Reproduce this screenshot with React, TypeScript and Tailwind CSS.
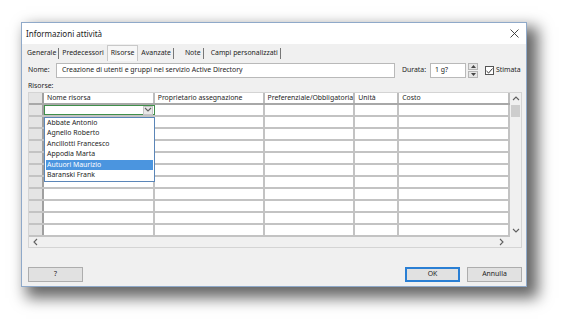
import React from "react";

const FONT = "font-['Noto_Sans',sans-serif]";

const COLS = [
  { label: "Nome risorsa", w: "w-[111px]" },
  { label: "Proprietario assegnazione", w: "w-[110px]" },
  { label: "Preferenziale/Obbligatoria", w: "w-[91px]" },
  { label: "Unità", w: "w-[44px]" },
  { label: "Costo", w: "w-[111px]" },
];

const RESOURCES = [
  "Abbate Antonio",
  "Agnello Roberto",
  "Ancillotti Francesco",
  "Appodia Marta",
  "Autuori Maurizio",
  "Baranski Frank",
];

const TABS = ["Generale", "Predecessori", "Risorse", "Avanzate", "Note", "Campi personalizzati"];

function Chevron({ dir }: { dir: "up" | "down" | "left" | "right" }) {
  const d = {
    up: "M1 5 L4 2 L7 5",
    down: "M1 2 L4 5 L7 2",
    left: "M5 1 L2 4 L5 7",
    right: "M2 1 L5 4 L2 7",
  }[dir];
  return (
    <svg width="8" height="8" viewBox="0 0 8 8" className="block">
      <path d={d} fill="none" stroke="#606060" strokeWidth="1.1" />
    </svg>
  );
}

function Button({ label, primary }: { label: string; primary?: boolean }) {
  return (
    <div
      className={`w-[55px] h-[15px] flex items-center justify-center bg-[#e1e1e1] text-[#222] ${
        primary ? "border-2 border-[#2a7fd4]" : "border border-[#adadad]"
      }`}
    >
      {label}
    </div>
  );
}

export default function App() {
  return (
    <div className={`w-[570px] h-[330px] bg-white overflow-hidden pl-[21px] pt-[22px] ${FONT} text-[6.9px] text-[#1e1e1e]`}>
      {/* DIALOG */}
      <div className="w-[506px] h-[265px] flex flex-col bg-[#f0f0f0] border border-[#8fa9c9] shadow-[8px_8px_14px_3px_rgba(0,0,0,0.6)]">
        {/* TITLE */}
        <div className="h-[21px] bg-white flex items-center justify-between pl-[4px] pr-[7px] text-[8px] text-[#222]">
          <span>Informazioni attività</span>
          <svg width="9" height="9" viewBox="0 0 9 9">
            <path d="M0.5 0.5 L8.5 8.5 M8.5 0.5 L0.5 8.5" stroke="#333" strokeWidth="0.9" />
          </svg>
        </div>

        {/* TABS */}
        <div className="h-[17px] flex items-end pl-[4px]">
          {TABS.map((t, i) =>
            t === "Risorse" ? (
              <div key={t} className="h-[16px] px-[3px] flex items-center bg-[#f7f7f7] border-x border-t border-[#c9c9c9] mx-[1px]">
                {t}
              </div>
            ) : (
              <div key={t} className={`h-[15px] flex items-center ${t === "Note" ? "pl-[9px] pr-[5px]" : i === 0 ? "pl-[1px] pr-[1px]" : "px-[2px]"}`}>
                <span>{t}</span>
                {TABS[i + 1] !== "Risorse" && <span className="ml-[2px] w-[1px] h-[11px] bg-[#777]" />}
              </div>
            )
          )}
        </div>

        {/* BODY */}
        <div className="flex-1 flex flex-col pl-[6px] pr-[4px] pt-[2px] pb-[4px]">
          {/* NOME ROW */}
          <div className="h-[15px] flex items-center">
            <span className="w-[28px]">Nome:</span>
            <div className="w-[339px] h-[15px] bg-white border border-[#b9b9b9] flex items-center pl-[5px]">
              Creazione di utenti e gruppi nel servizio Active Directory
            </div>
            <span className="ml-[7px] w-[28px]">Durata:</span>
            <div className="w-[36px] h-[15px] bg-white border border-[#b9b9b9] flex items-center pl-[4px]">1 g?</div>
            <div className="ml-[2px] w-[10px] h-[15px] flex flex-col gap-[1px]">
              <div className="flex-1 bg-[#e6e6e6] border border-[#b5b5b5] flex items-center justify-center">
                <svg width="5" height="3" viewBox="0 0 5 3"><path d="M0 3 L2.5 0 L5 3Z" fill="#444" /></svg>
              </div>
              <div className="flex-1 bg-[#e6e6e6] border border-[#b5b5b5] flex items-center justify-center">
                <svg width="5" height="3" viewBox="0 0 5 3"><path d="M0 0 L2.5 3 L5 0Z" fill="#444" /></svg>
              </div>
            </div>
            <div className="ml-[7px] w-[9px] h-[9px] bg-white border border-[#555] flex items-center justify-center">
              <svg width="7" height="6" viewBox="0 0 7 6"><path d="M0.5 3 L2.6 5 L6.5 0.5" fill="none" stroke="#333" strokeWidth="1" /></svg>
            </div>
            <span className="ml-[2px]">Stimata</span>
          </div>

          <div className="h-[10px] mt-[3px] flex items-center">Risorse:</div>

          {/* GRID */}
          <div className="relative mt-[1px] w-[494px] h-[156px] flex flex-col border border-[#d4d4d4] bg-[#f0f0f0]">
            <div className="h-[144px] flex overflow-hidden">
              <div className="w-[482px] flex flex-col overflow-hidden">
                {/* header */}
                <div className="h-[12px] shrink-0 flex border-b-2 border-[#a8a8a8]">
                  <div className="w-[15px] bg-[#e4e4e4] border-r-2 border-[#a0a0a0]" />
                  {COLS.map((c) => (
                    <div key={c.label} className={`${c.w} bg-white border-r-2 border-[#bdbdbd] pl-[3px] flex items-center whitespace-nowrap overflow-hidden`}>
                      {c.label}
                    </div>
                  ))}
                </div>
                {Array.from({ length: 11 }).map((_, r) => (
                  <div key={r} className="h-[12px] shrink-0 flex border-b-2 border-[#c3c3c3]">
                    <div className="w-[15px] bg-[#e4e4e4] border-r-2 border-[#a0a0a0]" />
                    {COLS.map((c, ci) =>
                      r === 0 && ci === 0 ? (
                        <div key={ci} className={`${c.w} bg-white border border-[#3f8f4a] flex justify-end items-center pr-[1px]`}>
                          <div className="w-[10px] h-[9px] bg-[#e8e8e8] border border-[#c4c4c4] flex items-center justify-center">
                            <Chevron dir="down" />
                          </div>
                        </div>
                      ) : (
                        <div key={ci} className={`${c.w} bg-white border-r-2 border-[#c3c3c3]`} />
                      )
                    )}
                  </div>
                ))}
              </div>
              {/* vertical scrollbar */}
              <div className="w-[11px] flex flex-col items-center">
                <div className="h-[12px] flex items-center justify-center"><Chevron dir="up" /></div>
                <div className="w-[9px] h-[12px] bg-[#cdcdcd]" />
                <div className="flex-1" />
                <div className="h-[12px] flex items-center justify-center"><Chevron dir="down" /></div>
              </div>
            </div>
            {/* horizontal scrollbar */}
            <div className="flex-1 flex items-center justify-between pl-[3px] pr-[15px]">
              <Chevron dir="left" />
              <Chevron dir="right" />
            </div>

            {/* dropdown list */}
            <div className="absolute left-[15px] top-[24px] w-[111px] h-[65px] bg-white border border-[#5b86b8] px-[1px]">
              {RESOURCES.map((r) => (
                <div
                  key={r}
                  className={`h-[10.4px] flex items-center pl-[1px] ${r === "Autuori Maurizio" ? "bg-[#4b95df] text-white" : ""}`}
                >
                  {r}
                </div>
              ))}
            </div>
          </div>

          {/* BUTTONS */}
          <div className="mt-auto flex items-center">
            <Button label="?" />
            <div className="flex-1" />
            <div className="flex gap-[7px]">
              <Button label="OK" primary />
              <Button label="Annulla" />
            </div>
          </div>
        </div>
      </div>
    </div>
  );
}
